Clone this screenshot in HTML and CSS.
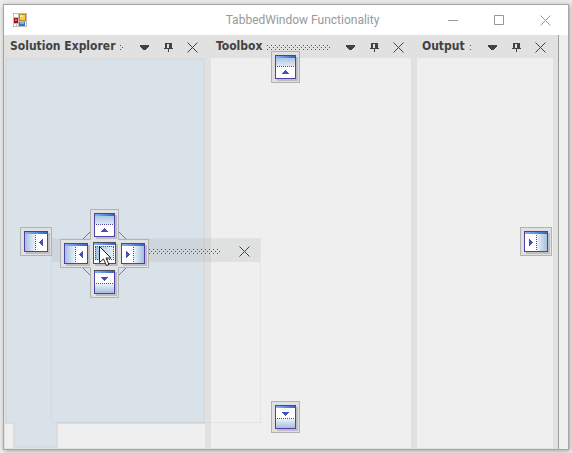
FILE: index.html
```html
<!DOCTYPE html>
<html lang="en">
<head>
<meta charset="utf-8">
<title>TabbedWindow Functionality</title>
<link rel="stylesheet" href="styles.css">
</head>
<body>
<svg width="0" height="0" class="defs" aria-hidden="true">
  <defs>
    <linearGradient id="bar" x1="0" x2="1" y1="0" y2="0"><stop offset="0" stop-color="#82b4f4"/><stop offset="1" stop-color="#3565c8"/></linearGradient>
    <linearGradient id="fadeDown" x1="0" x2="0" y1="0" y2="1"><stop offset="0" stop-color="#adc6e2"/><stop offset="1" stop-color="#dce8f4"/></linearGradient>
    <linearGradient id="fadeUp" x1="0" x2="0" y1="1" y2="0"><stop offset="0" stop-color="#a4bfde"/><stop offset="1" stop-color="#eaf1f9"/></linearGradient>
    <linearGradient id="fadeRight" x1="0" x2="1" y1="0" y2="0"><stop offset="0" stop-color="#a4bfde"/><stop offset="1" stop-color="#eaf1f9"/></linearGradient>
    <linearGradient id="fadeLeft" x1="1" x2="0" y1="0" y2="0"><stop offset="0" stop-color="#a4bfde"/><stop offset="1" stop-color="#eaf1f9"/></linearGradient>
    <symbol id="dock-top" viewBox="0 0 23 26">
      <rect x="2" y="2" width="21" height="24" fill="#bdbdc3"/>
      <rect width="21" height="24" fill="#503fa5"/><rect x="1" y="1" width="19" height="22" fill="#fff"/>
      <rect x="1" y="3" width="19" height="8" fill="url(#fadeDown)"/>
      <rect width="21" height="1" fill="#4c4c60"/><rect x="1" y="1" width="19" height="2" fill="url(#bar)"/>
      <path d="M2 11.5H20" stroke="#503fa5" stroke-dasharray="1 1"/>
      <path d="M10 15h1v1h1v1h1v1h1v1H7v-1h1v-1h1v-1h1z" fill="#4351b5"/>
    </symbol>
    <symbol id="dock-bottom" viewBox="0 0 23 26">
      <rect x="2" y="2" width="21" height="24" fill="#bdbdc3"/>
      <rect width="21" height="24" fill="#503fa5"/><rect x="1" y="1" width="19" height="22" fill="#fff"/>
      <rect x="1" y="14" width="19" height="9" fill="url(#fadeUp)"/>
      <rect width="21" height="1" fill="#4c4c60"/><rect x="1" y="1" width="19" height="2" fill="url(#bar)"/>
      <path d="M2 13.5H20" stroke="#503fa5" stroke-dasharray="1 1"/>
      <path d="M7 7h7v1h-1v1h-1v1h-1v1h-1v-1H9V9H8V8H7z" fill="#4351b5"/>
    </symbol>
    <symbol id="dock-left" viewBox="0 0 26 23">
      <rect x="2" y="2" width="24" height="21" fill="#bdbdc3"/>
      <rect width="24" height="21" fill="#503fa5"/><rect x="1" y="1" width="22" height="19" fill="#fff"/>
      <rect x="1" y="3" width="10" height="17" fill="url(#fadeRight)"/>
      <rect width="24" height="1" fill="#4c4c60"/><rect x="1" y="1" width="22" height="2" fill="url(#bar)"/>
      <path d="M11.5 4V20" stroke="#503fa5" stroke-dasharray="1 1"/>
      <path d="M19 8v7h-1v-1h-1v-1h-1v-1h-1v-1h1v-1h1V9h1V8z" fill="#4351b5"/>
    </symbol>
    <symbol id="dock-right" viewBox="0 0 26 23">
      <rect x="2" y="2" width="24" height="21" fill="#bdbdc3"/>
      <rect width="24" height="21" fill="#503fa5"/><rect x="1" y="1" width="22" height="19" fill="#fff"/>
      <rect x="13" y="3" width="10" height="17" fill="url(#fadeLeft)"/>
      <rect width="24" height="1" fill="#4c4c60"/><rect x="1" y="1" width="22" height="2" fill="url(#bar)"/>
      <path d="M12.500 4V20" stroke="#503fa5" stroke-dasharray="1 1"/>
      <path d="M5 8v7h1v-1h1v-1h1v-1h1v-1H8v-1H7V9H6V8z" fill="#4351b5"/>
    </symbol>
    <symbol id="menu" viewBox="0 0 9 11"><path d="M0 3h9v2H8v1H7v1H6v1H3V7H2V6H1V5H0z" fill="#424242"/></symbol>
    <symbol id="pin" viewBox="0 0 9 11"><path d="M1 1h7v5h1v1H5v3H4V7H0V6h1V1zM3 2v4h2V2z" fill="#424242" fill-rule="evenodd"/></symbol>
    <symbol id="close" viewBox="0 0 11 11"><path d="M.5.5l10 10M10.500.5l-10 10" stroke="currentColor" fill="none"/></symbol>
  </defs>
</svg>
<div class="window">
  <header class="titlebar">
    <svg class="app-icon" width="14" height="14" viewBox="0 0 14 14" aria-hidden="true">
      <rect width="14" height="14" fill="#bcbcbc"/><path d="M1 1h4v3H1zM1 11h2v2H1zM4 11h1v2H4zM12 9h1v4h-1z" fill="#fff"/>
      <rect x="1" y="5" width="4" height="5" fill="#a51414"/><rect x="2" y="6" width="2" height="2" fill="#e96a50"/>
      <rect x="6" y="1" width="7" height="7" fill="#c18a10"/><rect x="7" y="2" width="5" height="5" fill="#fbcb3c"/><rect x="7" y="2" width="3" height="2" fill="#ffe68a"/>
      <rect x="6" y="9" width="6" height="4" fill="#3f70cc"/><rect x="7" y="9" width="4" height="2" fill="#86adf0"/>
    </svg>
    <h1 class="title">TabbedWindow Functionality</h1>
    <div class="controls">
      <button class="control" aria-label="Minimize"><svg width="11" height="11"><path d="M0 5.500H10" stroke="#999"/></svg></button>
      <button class="control" aria-label="Maximize"><svg width="11" height="11"><path d="M.5.5h9v9h-9z" fill="none" stroke="#999"/></svg></button>
      <button class="control" aria-label="Close"><svg width="11" height="11"><use href="#close"/></svg></button>
    </div>
  </header>
  <main class="workspace">
    <div class="dock">
      <section class="pane">
        <header class="pane-head"><h2 class="pane-title">Solution Explorer</h2><span class="grip"></span>
          <button class="tool" aria-label="Menu"><svg width="9" height="11"><use href="#menu"/></svg></button>
          <button class="tool" aria-label="Auto hide"><svg width="9" height="11"><use href="#pin"/></svg></button>
          <button class="tool" aria-label="Close"><svg width="11" height="11"><use href="#close"/></svg></button></header>
        <div class="pane-body"></div>
      </section>
      <section class="pane">
        <header class="pane-head"><h2 class="pane-title">Toolbox</h2><span class="grip"></span>
          <button class="tool" aria-label="Menu"><svg width="9" height="11"><use href="#menu"/></svg></button>
          <button class="tool" aria-label="Auto hide"><svg width="9" height="11"><use href="#pin"/></svg></button>
          <button class="tool" aria-label="Close"><svg width="11" height="11"><use href="#close"/></svg></button></header>
        <div class="pane-body"></div>
      </section>
      <section class="pane">
        <header class="pane-head"><h2 class="pane-title">Output</h2><span class="grip"></span>
          <button class="tool" aria-label="Menu"><svg width="9" height="11"><use href="#menu"/></svg></button>
          <button class="tool" aria-label="Auto hide"><svg width="9" height="11"><use href="#pin"/></svg></button>
          <button class="tool" aria-label="Close"><svg width="11" height="11"><use href="#close"/></svg></button></header>
        <div class="pane-body"></div>
      </section>
    </div>
    <div class="preview"></div>
    <div class="preview-tab"></div>
    <div class="floating">
      <header class="floating-head"><span class="grip"></span>
        <button class="tool" aria-label="Close"><svg width="11" height="11"><use href="#close"/></svg></button></header>
      <div class="floating-body"></div>
    </div>
    <div class="guide guide-top"><svg width="23" height="26"><use href="#dock-top"/></svg></div>
    <div class="guide guide-bottom"><svg width="23" height="26"><use href="#dock-bottom"/></svg></div>
    <div class="guide guide-left"><svg width="26" height="23"><use href="#dock-left"/></svg></div>
    <div class="guide guide-right"><svg width="26" height="23"><use href="#dock-right"/></svg></div>
    <svg class="compass" width="89" height="89" viewBox="0 0 89 89" aria-hidden="true">
      <path d="M22 31l9-9M58 22l9 9M22 58l9 9M58 67l9-9" stroke="#4b7dca"/>
      <path d="M30.500.5h28v30h30v28h-30v30h-28v-30H.5v-28h30z" fill="#e2e2e2" stroke="#b2b2b2"/>
      <use href="#dock-top" x="34" y="4" width="23" height="26"/>
      <use href="#dock-left" x="4" y="34" width="26" height="23"/>
      <use href="#dock-right" x="61" y="34" width="26" height="23"/>
      <use href="#dock-bottom" x="34" y="61" width="23" height="26"/>
      <rect x="35" y="35" width="23" height="22" fill="#bdbdc3"/>
      <rect x="33" y="33" width="23" height="22" fill="#503fa5"/><rect x="34" y="34" width="21" height="20" fill="#fff"/>
      <rect x="35" y="37" width="19" height="14" fill="url(#fadeRight)"/>
      <rect x="33" y="33" width="23" height="1" fill="#4c4c60"/><rect x="34" y="34" width="21" height="2" fill="url(#bar)"/>
      <path d="M35 37.500H55M35.500 38V51M53.500 38V51M35 50.500H55" stroke="#503fa5" stroke-dasharray="1 1"/>
      <path d="M39.500 37.500v16l4-3.500 3 6.500 2.500-1-3-6.500h5z" fill="#fff" stroke="#222"/>
    </svg>
  </main>
</div>
</body>
</html>
```
FILE: styles.css
```css
* { box-sizing: border-box; }

body {
  margin: 0;
  padding: 4px 3px 3px;
  min-height: 100vh;
  display: flex;
  background: #ededed;
  color: #424242;
  font-family: "Noto Sans", sans-serif;
}

.defs { position: absolute; }
svg { display: block; flex: none; }

button {
  display: grid;
  place-items: center;
  margin: 0;
  padding: 0;
  border: 0;
  background: none;
  color: inherit;
}

.window {
  flex: 1;
  display: flex;
  flex-direction: column;
  border: 1px solid #a5a5a7;
  background: #efefef;
  box-shadow: 1px 1px 5px #a0a0a0;
}

.titlebar {
  display: grid;
  grid-template-columns: 1fr auto 1fr;
  align-items: center;
  height: 30px;
  padding-left: 9px;
  background: #fff;
  color: #999;
}

.title {
  margin: 0;
  padding-left: 24px;
  font: 12px/16px Roboto, sans-serif;
}

.controls { display: flex; justify-content: flex-end; }
.control { width: 46px; height: 30px; }

.workspace {
  position: relative;
  flex: 1;
  display: flex;
  padding-right: 9px;
}

.dock {
  flex: 1;
  display: grid;
  grid-template-columns: 200fr 200fr 136fr;
  gap: 6px;
  padding: 0 5px 1px 1px;
  border-right: 1px solid #9c9c9c;
  background: #e1e1e2;
}

.pane { display: flex; flex-direction: column; min-width: 0; }

.pane-head {
  display: flex;
  align-items: center;
  height: 23px;
  padding: 0 1px 0 5px;
}

.pane-title {
  margin: 0;
  font: bold 12px/23px "DejaVu Sans Condensed", "Noto Sans", sans-serif;
  white-space: nowrap;
}

.grip {
  flex: 1;
  height: 5px;
  margin: 2px 8px 0 5px;
  background:
    conic-gradient(from 270deg at 1px 1px, #555 90deg, transparent 0) 0 0 / 4px 4px,
    conic-gradient(from 270deg at 1px 1px, #555 90deg, transparent 0) 2px 2px / 4px 4px;
}

.tool { width: 24px; height: 23px; padding-top: 2px; }
.pane-body { flex: 1; background: #efefef; }

.preview {
  position: absolute;
  top: 23px;
  left: 1px;
  width: 200px;
  bottom: 25px;
  border: 2px solid #d9dbdc;
  background: #d9e1e9;
}

.preview-tab {
  position: absolute;
  left: 9px;
  bottom: 1px;
  width: 45px;
  height: 26px;
  border: 2px solid #d9dbdc;
  border-top: 0;
  background: #d9e1e9;
}

.floating {
  position: absolute;
  top: 203px;
  left: 47px;
  width: 210px;
  height: 185px;
  border: 1px solid rgb(185 195 215 / 25%);
}

.floating-head {
  display: flex;
  align-items: center;
  height: 23px;
  padding: 0 4px 0 84px;
  background: rgb(175 178 180 / 25%);
}

.floating-head .grip { margin: 2px 12px 0 5px; }

.guide {
  position: absolute;
  padding: 3px;
  border: 1px solid #b2b2b2;
  background: #e0e0e0;
  overflow: hidden;
}

.guide-top, .guide-bottom { left: 267px; width: 29px; height: 32px; }
.guide-left, .guide-right { top: 192px; width: 32px; height: 29px; }
.guide-top { top: 16px; }
.guide-bottom { bottom: 16px; }
.guide-left { left: 16px; }
.guide-right { right: 16px; }

.compass { position: absolute; top: 174px; left: 56px; }
```
